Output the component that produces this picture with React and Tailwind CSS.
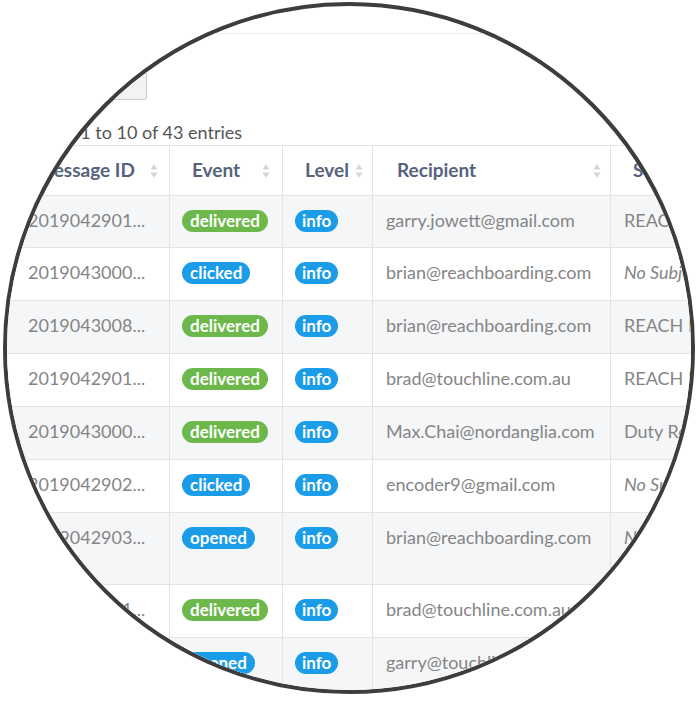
import React from "react";

const rows = [
  { id: "2019042901...", ev: "delivered", to: "garry.jowett@gmail.com", sub: "REACH Boarding", it: false, h: "h-[52px]" },
  { id: "2019043000...", ev: "clicked", to: "brian@reachboarding.com", sub: "No Subject", it: true, h: "h-[53px]" },
  { id: "2019043008...", ev: "delivered", to: "brian@reachboarding.com", sub: "REACH Boarding", it: false, h: "h-[53px]" },
  { id: "2019042901...", ev: "delivered", to: "brad@touchline.com.au", sub: "REACH Boarding", it: false, h: "h-[53px]" },
  { id: "2019043000...", ev: "delivered", to: "Max.Chai@nordanglia.com", sub: "Duty Report", it: false, h: "h-[53px]" },
  { id: "2019042902...", ev: "clicked", to: "encoder9@gmail.com", sub: "No Subject", it: true, h: "h-[53px]" },
  { id: "2019042903...", ev: "opened", to: "brian@reachboarding.com", sub: "No Subject", it: true, h: "h-[72px]" },
  { id: "2019042901...", ev: "delivered", to: "brad@touchline.com.au", sub: "REACH Boarding", it: false, h: "h-[53px]" },
  { id: "2019043001...", ev: "opened", to: "garry@touchline.com.au", sub: "REACH Boarding", it: false, h: "h-[53px]" },
];

function SortIcon() {
  return (
    <svg width="8" height="16" viewBox="0 0 8 16" className="shrink-0">
      <path d="M4 1 L7.5 6.5 L0.5 6.5 Z" fill="#d6d6d6" />
      <path d="M4 15 L7.5 9.5 L0.5 9.5 Z" fill="#d6d6d6" />
    </svg>
  );
}

function Badge({ kind }) {
  const green = kind === "delivered";
  return (
    <span
      className={
        "inline-flex h-[22px] items-center rounded-full px-[8px] text-[17px] font-bold leading-none text-white " +
        (green ? "bg-[#6cb84a]" : "bg-[#1a9ce8]")
      }
    >
      {kind}
    </span>
  );
}

export default function App() {
  return (
    <div
      className="relative h-[701px] w-[700px] overflow-hidden bg-white"
      style={{ fontFamily: "Lato, 'Open Sans', sans-serif" }}
    >
      <div className="ml-[3px] mt-[2px] h-[692px] w-[692px] overflow-hidden rounded-full border-[4px] border-[#3d3d3d] bg-white">
        <div className="-ml-[7px] -mt-[6px] w-[900px]">
          <div className="h-[34px] border-b border-[#efefef]" />
          <div className="mt-[6px] h-[60px] w-[147px] rounded-[3px] border border-[#c9c9c9] bg-[#f3f3f3]" />
          <div className="mt-[21px] h-[22px] whitespace-nowrap pl-[8px] text-[18px] leading-[22px] text-[#555]">
            Showing 1 to 10 of 43 entries
          </div>
          <div className="mt-[2px]">
            <div className="flex h-[51px] border-y border-[#e3e4e6] text-[19px] font-bold text-[#55637c]">
              <div className="flex w-[170px] items-center justify-between whitespace-nowrap border-r border-[#e3e4e6] pl-[36px] pr-[11px]">
                <span>Message ID</span>
                <SortIcon />
              </div>
              <div className="flex w-[113px] items-center justify-between border-r border-[#e3e4e6] pl-[22px] pr-[12px]">
                <span>Event</span>
                <SortIcon />
              </div>
              <div className="flex w-[90px] items-center justify-between border-r border-[#e3e4e6] pl-[22px] pr-[9px]">
                <span>Level</span>
                <SortIcon />
              </div>
              <div className="flex w-[238px] items-center justify-between border-r border-[#e3e4e6] pl-[24px] pr-[9px]">
                <span>Recipient</span>
                <SortIcon />
              </div>
              <div className="flex flex-1 items-center pl-[22px]">
                <span>Subject</span>
              </div>
            </div>
            {rows.map((r, i) => (
              <div
                key={i}
                className={
                  "flex whitespace-nowrap border-b border-[#e3e4e6] text-[18px] leading-[22px] text-[#858585] " +
                  r.h +
                  (i % 2 === 0 ? " bg-[#f5f6f8]" : " bg-white")
                }
              >
                <div className="w-[170px] border-r border-[#e3e4e6] pl-[28px] pt-[13px]">{r.id}</div>
                <div className="w-[113px] border-r border-[#e3e4e6] pl-[12px] pt-[13px]">
                  <Badge kind={r.ev} />
                </div>
                <div className="w-[90px] border-r border-[#e3e4e6] pl-[12px] pt-[13px]">
                  <span className="inline-flex h-[22px] items-center rounded-full bg-[#1a9ce8] px-[7px] text-[17px] font-bold leading-none text-white">
                    info
                  </span>
                </div>
                <div className="w-[238px] border-r border-[#e3e4e6] pl-[13px] pt-[13px]">{r.to}</div>
                <div className={"flex-1 pl-[13px] pt-[13px]" + (r.it ? " italic" : "")}>{r.sub}</div>
              </div>
            ))}
          </div>
        </div>
      </div>
    </div>
  );
}
